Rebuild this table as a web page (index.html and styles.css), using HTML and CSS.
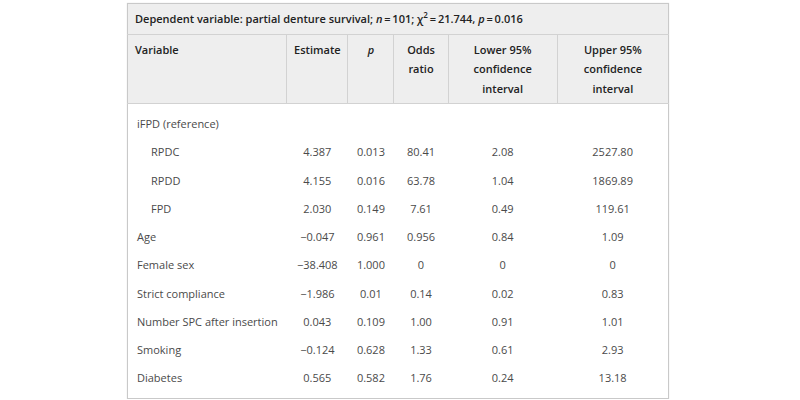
FILE: index.html
```html
<!DOCTYPE html>
<html>
<head>
<meta charset="utf-8">
<link rel="stylesheet" href="styles.css">
</head>
<body>
<div class="frame">
<table class="stats">
  <colgroup>
    <col class="c-var"><col class="c-est"><col class="c-p"><col class="c-or"><col class="c-lo"><col class="c-hi">
  </colgroup>
  <thead>
    <tr class="caption-row">
      <th colspan="6" class="caption">Dependent variable: partial denture survival; <i>n</i>&#8201;=&#8201;101; χ<sup>2</sup>&#8201;=&#8201;21.744, <i>p</i>&#8201;=&#8201;0.016</th>
    </tr>
    <tr class="head-row">
      <th class="left">Variable</th>
      <th>Estimate</th>
      <th><i>p</i></th>
      <th>Odds<br>ratio</th>
      <th>Lower 95%<br>confidence<br>interval</th>
      <th>Upper 95%<br>confidence<br>interval</th>
    </tr>
  </thead>
  <tbody>
    <tr class="first"><td class="left">iFPD (reference)</td><td></td><td></td><td></td><td></td><td></td></tr>
    <tr><td class="left indent">RPDC</td><td>4.387</td><td>0.013</td><td>80.41</td><td>2.08</td><td>2527.80</td></tr>
    <tr><td class="left indent">RPDD</td><td>4.155</td><td>0.016</td><td>63.78</td><td>1.04</td><td>1869.89</td></tr>
    <tr><td class="left indent">FPD</td><td>2.030</td><td>0.149</td><td>7.61</td><td>0.49</td><td>119.61</td></tr>
    <tr><td class="left">Age</td><td>−0.047</td><td>0.961</td><td>0.956</td><td>0.84</td><td>1.09</td></tr>
    <tr><td class="left">Female sex</td><td>−38.408</td><td>1.000</td><td>0</td><td>0</td><td>0</td></tr>
    <tr><td class="left">Strict compliance</td><td>−1.986</td><td>0.01</td><td>0.14</td><td>0.02</td><td>0.83</td></tr>
    <tr><td class="left">Number SPC after insertion</td><td>0.043</td><td>0.109</td><td>1.00</td><td>0.91</td><td>1.01</td></tr>
    <tr><td class="left">Smoking</td><td>−0.124</td><td>0.628</td><td>1.33</td><td>0.61</td><td>2.93</td></tr>
    <tr class="last"><td class="left">Diabetes</td><td>0.565</td><td>0.582</td><td>1.76</td><td>0.24</td><td>13.18</td></tr>
  </tbody>
</table>
</div>
</body>
</html>
```

FILE: styles.css
```css
html, body {
  margin: 0;
  padding: 0;
  background: #ffffff;
}

.frame {
  padding: 3px 0 0 127px;
}

.stats {
  border-collapse: collapse;
  width: 542px;
  table-layout: fixed;
  font-family: "Open Sans", "Noto Sans", "Liberation Sans", sans-serif;
  font-size: 11px;
  color: #4a4a4a;
  border: 1px solid #c9c9c9;
  box-shadow: 0 0 1px rgba(0,0,0,0.15);
}

.c-var { width: 159px; }
.c-est { width: 61px; }
.c-p { width: 46px; }
.c-or { width: 54px; }
.c-lo { width: 109px; }
.c-hi { width: 111px; }

.stats thead th {
  background: #eeeeee;
  color: #222222;
  font-weight: 600;
  vertical-align: top;
  text-align: center;
  line-height: 19.5px;
}

.caption-row th.caption {
  text-align: left;
  padding: 5px 8px 5px 7px;
  border-bottom: 1px solid #d2d2d2;
  height: 19px;
}

.caption sup {
  font-size: 8px;
  line-height: 0;
  vertical-align: 5px;
}

.head-row th {
  padding: 5px 4px 5px 4px;
  border-left: 1px solid #d2d2d2;
  border-bottom: 1px solid #d2d2d2;
}

.head-row th:first-child {
  border-left: none;
}

.stats th.left {
  text-align: left;
  padding-left: 7px;
}

.stats tbody td {
  text-align: center;
  padding: 4px 4px;
  line-height: 20.25px;
  white-space: nowrap;
}

.stats tbody td.left {
  text-align: left;
  padding-left: 9px;
}

.stats tbody td.indent {
  padding-left: 23px;
}

.stats tbody tr.first td {
  padding-top: 10px;
}

.stats tbody tr.last td {
  padding-bottom: 9px;
}
```
